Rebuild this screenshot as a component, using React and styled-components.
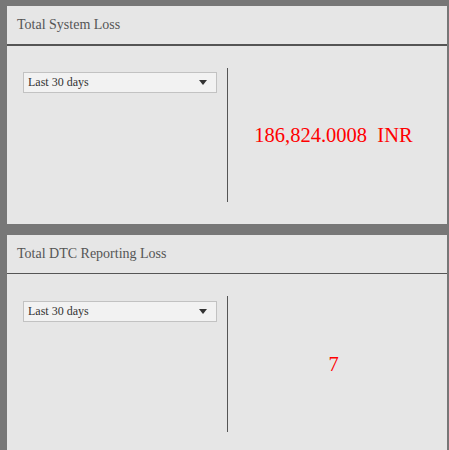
import { createGlobalStyle } from "styled-components"
import styled from "styled-components"

const GlobalStyle = createGlobalStyle`
    html, body {
        margin: 0;
        padding: 0;
        background: #777777;
        font-family: "Liberation Serif", "Times New Roman", serif;
    }
`

const PageWrapper = styled.div`
    display: flex;
    flex-direction: column;
    gap: 11px;
    padding: 6px 2px 0 7px;
    height: 450px;
    box-sizing: border-box;
    overflow: hidden;
`

const Card = styled.div`
    background: #e6e6e6;
    display: flex;
    flex-direction: column;
    flex-shrink: 0;
`

const CardHeader = styled.div`
    height: 38px;
    display: flex;
    align-items: center;
    padding-left: 10px;
    font-size: 14px;
    color: #555555;
    border-bottom: ${props => props.rule}px solid #555555;
`

const CardBody = styled.div`
    display: flex;
    padding: 22px 0 22px 16px;
`

const FilterColumn = styled.div`
    width: 204px;
    padding-top: ${props => props.offset}px;
`

const Dropdown = styled.div`
    width: 194px;
    height: 21px;
    box-sizing: border-box;
    background: #f2f2f2;
    border: 1px solid #c2c2c2;
    display: flex;
    align-items: center;
    justify-content: space-between;
    padding: 0 9px 0 4px;
    font-size: 12px;
    color: #333333;
`

const Divider = styled.div`
    width: 1px;
    height: ${props => props.size}px;
    background: #555555;
`

const ValueColumn = styled.div`
    flex: 1;
    display: flex;
    align-items: center;
    justify-content: center;
    padding-right: 8px;
`

const ValueText = styled.span`
    font-size: 20.5px;
    color: #ff0000;
    white-space: pre;
`

const Caret = () => (
    <svg width="8" height="5" viewBox="0 0 8 5">
        <path d="M0 0 L8 0 L4 5 Z" fill="#333333" />
    </svg>
)

const panels = [
    { title: "Total System Loss", value: "186,824.0008  INR", rule: 2, divider: 134, offset: 4 },
    { title: "Total DTC Reporting Loss", value: "7", rule: 1, divider: 136, offset: 5 },
]

const App = () => {
    return (
        <>
            <GlobalStyle />
            <PageWrapper>
                {panels.map(panel => (
                    <Card key={panel.title}>
                        <CardHeader rule={panel.rule}>
                            {panel.title}
                        </CardHeader>
                        <CardBody>
                            <FilterColumn offset={panel.offset}>
                                <Dropdown>
                                    <span>Last 30 days</span>
                                    <Caret />
                                </Dropdown>
                            </FilterColumn>
                            <Divider size={panel.divider} />
                            <ValueColumn>
                                <ValueText>{panel.value}</ValueText>
                            </ValueColumn>
                        </CardBody>
                    </Card>
                ))}
            </PageWrapper>
        </>
    )
}

export default App
